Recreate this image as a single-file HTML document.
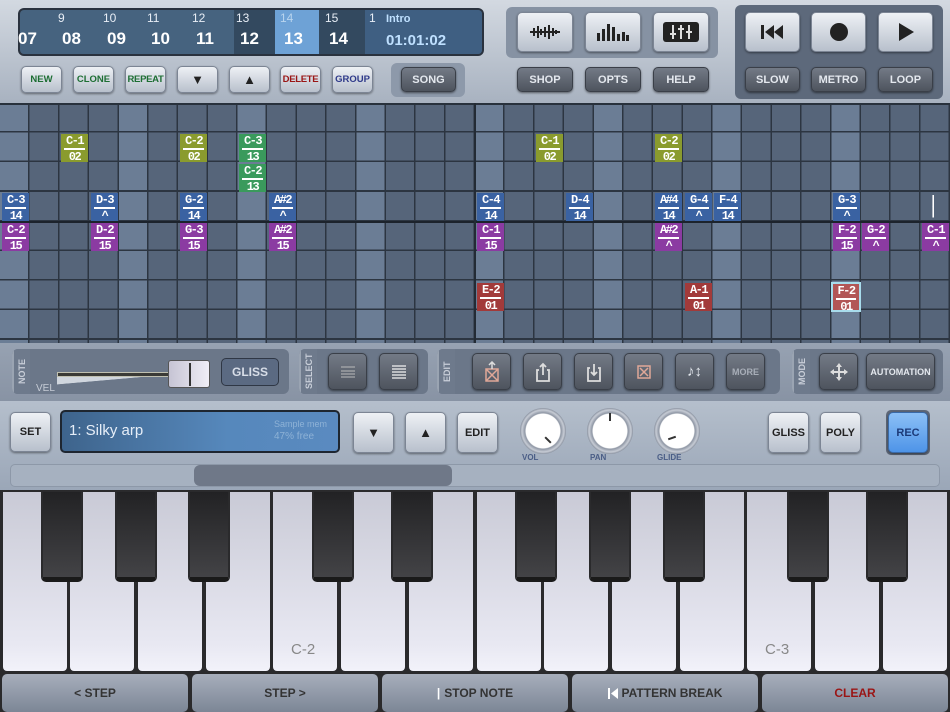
<!DOCTYPE html>
<html><head><meta charset="utf-8"><style>
*{margin:0;padding:0;box-sizing:border-box}
body{width:950px;height:712px;overflow:hidden;position:relative;font-family:"Liberation Sans",sans-serif;background:#a9b3c1}
.a{position:absolute}
.top{left:0;top:0;width:950px;height:103px;background:linear-gradient(180deg,#d3d9e1,#a8b2c0)}
.lb{position:absolute;border-radius:5px;background:linear-gradient(180deg,#eef1f5,#b8c0cc);border:1px solid #7c8594;box-shadow:0 1px 2px rgba(0,0,0,.45);font-weight:bold;font-size:11px;display:flex;align-items:center;justify-content:center;color:#222}
.db{position:absolute;border-radius:5px;background:linear-gradient(180deg,#737a86,#4e545e);border:1px solid #3a3f48;box-shadow:0 1px 2px rgba(0,0,0,.5);font-weight:bold;font-size:11px;display:flex;align-items:center;justify-content:center;color:#e4e8ee}
.panel{position:absolute;border-radius:6px;background:#7a8698}
.grid{left:0;top:103px;width:950px;height:240px;background-color:#56657a;
background-image:linear-gradient(#28313c 0 2px,transparent 2px),
repeating-linear-gradient(180deg,transparent 0 28px,#2c3541 28px 29.6px),
repeating-linear-gradient(90deg,transparent 0 28.2px,#2c3541 28.2px 29.6875px),
repeating-linear-gradient(90deg,#6b7d95 0 29.6875px,transparent 29.6875px 118.75px)}
.n{position:absolute;width:27px;height:28px;color:#fff;font:bold 12px/11px "Liberation Mono",monospace;text-align:center;padding-top:2px;letter-spacing:-1.5px;overflow:hidden}
.n span{display:block;border-bottom:2px solid #fff;margin:0 3px 2px;padding-bottom:1px}
.o{background:#8a9b2e}.g{background:#3a9a5c}.b{background:#3a62a2}.p{background:#8b3ba2}.r{background:#a23a3a}
.vl{position:absolute;writing-mode:vertical-rl;transform:rotate(180deg);color:#c8ced8;font-weight:bold;font-size:9px;text-align:center;display:flex;align-items:center;justify-content:center;background:#6e7a8c;border-right:2px solid #9aa4b2}
.wk{position:absolute;top:492px;width:64px;height:179px;border-radius:0 0 4px 4px;background:linear-gradient(180deg,#c9cad6,#e8e8f2 85%,#f2f2fa)}
.bk{position:absolute;top:490px;width:42px;height:92px;border-radius:0 0 5px 5px;background:linear-gradient(180deg,#222224,#434346);border:2px solid #2a2a2c;border-bottom:5px solid #1a1a1a}
.bb{position:absolute;top:674px;height:38px;width:186px;border-radius:5px;background:linear-gradient(180deg,#a7aebb,#7c8696);font-weight:bold;font-size:12px;color:#333;display:flex;align-items:center;justify-content:center}
.knob{position:absolute;width:46px;height:46px;border-radius:50%;background:radial-gradient(circle,#fff 0 17px,#8e96a4 18px,#c7ccd5 21px,#8a92a0 23px)}
.kl{position:absolute;top:453px;font-size:8px;font-weight:bold;color:#4a5d86}
.sm{font-size:9.5px}
.dn{position:absolute;top:29px;color:#fff;font-weight:bold;font-size:17px}
.up{position:absolute;top:11px;color:#e8eef6;font-size:12px}
</style></head><body>
<div class="a top"></div>
<div class="a" style="left:18px;top:8px;width:466px;height:48px;border-radius:6px;background:#2a323e">
<div style="position:absolute;left:2px;top:2px;width:462px;height:44px;border-radius:4px;background:#46637f"></div>
<div style="position:absolute;left:216px;top:2px;width:42px;height:44px;background:#33495f"></div>
<div style="position:absolute;left:257px;top:2px;width:44px;height:44px;background:#6ea2d6"></div>
<div style="position:absolute;left:301px;top:2px;width:46px;height:44px;background:#33495f"></div>
<div style="position:absolute;left:347px;top:2px;width:117px;height:44px;background:#3f5f82;border-radius:0 4px 4px 0"></div>
</div>
<div class="dn" style="left:18px">07</div>
<div class="up" style="left:58px">9</div><div class="dn" style="left:62px">08</div>
<div class="up" style="left:103px">10</div><div class="dn" style="left:107px">09</div>
<div class="up" style="left:147px">11</div><div class="dn" style="left:151px">10</div>
<div class="up" style="left:192px">12</div><div class="dn" style="left:196px">11</div>
<div class="up" style="left:236px">13</div><div class="dn" style="left:240px">12</div>
<div class="up" style="left:280px;color:#b8d4ee">14</div><div class="dn" style="left:284px">13</div>
<div class="up" style="left:325px">15</div><div class="dn" style="left:329px">14</div>
<div class="up" style="left:369px">1</div>
<div class="a" style="left:386px;top:13px;color:#bfe0ff;font-weight:bold;font-size:11px">Intro</div>
<div class="a" style="left:386px;top:32px;color:#bfe0ff;font-weight:bold;font-size:15px">01:01:02</div>
<div class="lb sm" style="left:21px;top:66px;width:41px;height:27px;color:#1d6e33">NEW</div>
<div class="lb sm" style="left:73px;top:66px;width:41px;height:27px;color:#1d6e33">CLONE</div>
<div class="lb sm" style="left:125px;top:66px;width:41px;height:27px;color:#1d6e33;letter-spacing:-.3px">REPEAT</div>
<div class="lb" style="left:177px;top:66px;width:41px;height:27px;font-size:13px">▼</div>
<div class="lb" style="left:229px;top:66px;width:41px;height:27px;font-size:13px">▲</div>
<div class="lb sm" style="left:280px;top:66px;width:41px;height:27px;color:#9a1515;letter-spacing:-.3px">DELETE</div>
<div class="lb sm" style="left:332px;top:66px;width:41px;height:27px;color:#2f3a8a">GROUP</div>
<div class="panel" style="left:391px;top:63px;width:74px;height:34px;background:#8d99aa"></div>
<div class="db" style="left:401px;top:67px;width:55px;height:25px">SONG</div>
<div class="panel" style="left:506px;top:7px;width:212px;height:51px;background:#8692a3"></div>
<div class="lb" style="left:517px;top:12px;width:56px;height:40px"><svg width="30" height="16" viewBox="0 0 30 16" fill="#222"><rect x="0" y="7" width="30" height="2"/><rect x="3" y="4" width="2" height="8"/><rect x="7" y="2" width="2" height="12"/><rect x="10" y="5" width="2" height="6"/><rect x="14" y="3" width="2" height="10"/><rect x="18" y="1" width="2" height="14"/><rect x="22" y="4" width="2" height="8"/><rect x="25" y="6" width="2" height="4"/></svg></div>
<div class="lb" style="left:585px;top:12px;width:56px;height:40px"><svg width="32" height="18" viewBox="0 0 32 18" fill="#222"><rect x="0" y="10" width="3" height="8"/><rect x="5" y="6" width="3" height="12"/><rect x="10" y="1" width="3" height="17"/><rect x="15" y="4" width="3" height="14"/><rect x="20" y="11" width="3" height="7"/><rect x="25" y="9" width="3" height="9"/><rect x="29" y="12" width="3" height="6"/></svg></div>
<div class="lb" style="left:653px;top:12px;width:56px;height:40px"><svg width="36" height="20" viewBox="0 0 36 20"><rect width="36" height="20" rx="3" fill="#222"/><g stroke="#ddd" stroke-width="2"><line x1="10" y1="3" x2="10" y2="17"/><line x1="18" y1="3" x2="18" y2="17"/><line x1="26" y1="3" x2="26" y2="17"/><line x1="7" y1="12" x2="13" y2="12"/><line x1="15" y1="7" x2="21" y2="7"/><line x1="23" y1="10" x2="29" y2="10"/></g></svg></div>
<div class="db" style="left:517px;top:67px;width:56px;height:25px">SHOP</div>
<div class="db" style="left:585px;top:67px;width:56px;height:25px">OPTS</div>
<div class="db" style="left:653px;top:67px;width:56px;height:25px">HELP</div>
<div class="panel" style="left:735px;top:5px;width:208px;height:94px;background:#5d697b"></div>
<div class="lb" style="left:745px;top:12px;width:55px;height:40px"><svg width="24" height="14" viewBox="0 0 24 14" fill="#222"><rect x="0" y="0" width="3" height="14"/><polygon points="4,7 13,0 13,14"/><polygon points="13,7 22,0 22,14"/></svg></div>
<div class="lb" style="left:811px;top:12px;width:55px;height:40px"><div style="width:18px;height:18px;border-radius:50%;background:#222"></div></div>
<div class="lb" style="left:878px;top:12px;width:55px;height:40px"><svg width="16" height="18" viewBox="0 0 16 18"><polygon points="1,0 16,9 1,18" fill="#222"/></svg></div>
<div class="db" style="left:745px;top:67px;width:55px;height:25px">SLOW</div>
<div class="db" style="left:811px;top:67px;width:55px;height:25px">METRO</div>
<div class="db" style="left:878px;top:67px;width:55px;height:25px">LOOP</div>
<div class="a grid"></div>
<div class="a" style="left:0;top:221px;width:950px;height:2px;background:#1c232c"></div>
<div class="a" style="left:474px;top:103px;width:2px;height:240px;background:#232b35"></div>
<div class="n o" style="left:61px;top:134px"><span>C-1</span>02</div>
<div class="n o" style="left:180px;top:134px"><span>C-2</span>02</div>
<div class="n g" style="left:239px;top:134px"><span>C-3</span>13</div>
<div class="n g" style="left:239px;top:164px"><span>C-2</span>13</div>
<div class="n o" style="left:536px;top:134px"><span>C-1</span>02</div>
<div class="n o" style="left:655px;top:134px"><span>C-2</span>02</div>
<div class="n b" style="left:2px;top:193px"><span>C-3</span>14</div>
<div class="n b" style="left:91px;top:193px"><span>D-3</span>^</div>
<div class="n b" style="left:180px;top:193px"><span>G-2</span>14</div>
<div class="n b" style="left:269px;top:193px"><span>A#2</span>^</div>
<div class="n b" style="left:477px;top:193px"><span>C-4</span>14</div>
<div class="n b" style="left:566px;top:193px"><span>D-4</span>14</div>
<div class="n b" style="left:655px;top:193px"><span>A#4</span>14</div>
<div class="n b" style="left:685px;top:193px"><span>G-4</span>^</div>
<div class="n b" style="left:714px;top:193px"><span>F-4</span>14</div>
<div class="n b" style="left:833px;top:193px"><span>G-3</span>^</div>
<div class="n" style="left:919px;top:194px">|<br>|</div>
<div class="n p" style="left:2px;top:223px"><span>C-2</span>15</div>
<div class="n p" style="left:91px;top:223px"><span>D-2</span>15</div>
<div class="n p" style="left:180px;top:223px"><span>G-3</span>15</div>
<div class="n p" style="left:269px;top:223px"><span>A#2</span>15</div>
<div class="n p" style="left:477px;top:223px"><span>C-1</span>15</div>
<div class="n p" style="left:655px;top:223px"><span>A#2</span>^</div>
<div class="n p" style="left:833px;top:223px"><span>F-2</span>15</div>
<div class="n p" style="left:862px;top:223px"><span>G-2</span>^</div>
<div class="n p" style="left:922px;top:223px"><span>C-1</span>^</div>
<div class="n r" style="left:477px;top:283px"><span>E-2</span>01</div>
<div class="n r" style="left:685px;top:283px"><span>A-1</span>01</div>
<div class="n r" style="left:831px;top:282px;width:30px;height:30px;border:2px solid #a8dcec;background:#b25656"><span>F-2</span>01</div>
<div class="a" style="left:0;top:343px;width:950px;height:58px;background:linear-gradient(180deg,#97a2b2,#8893a4)"></div>
<div class="panel" style="left:12px;top:349px;width:277px;height:45px;background:#6b7789;overflow:hidden"><div class="vl" style="left:0;top:0;width:18px;height:45px">NOTE</div></div>
<div class="a" style="left:57px;top:372px;width:120px;height:5px;background:#3a3a36;border:1px solid #c0c0b0"></div>
<div class="a" style="left:57px;top:377px;width:115px;height:8px;background:linear-gradient(175deg,#d0d6de 0 40%,transparent 42%)"></div>
<div class="a" style="left:36px;top:383px;color:#c6ccd6;font-size:10px">VEL</div>
<div class="a" style="left:168px;top:360px;width:42px;height:28px;border-radius:3px;background:linear-gradient(90deg,#c6c4d4,#f0eef6);border:1px solid #555"><div style="position:absolute;left:20px;top:2px;width:2px;height:23px;background:#333"></div></div>
<div class="a" style="left:221px;top:358px;width:58px;height:28px;border-radius:5px;background:#5b6a82;border:1px solid #2f3745;color:#d8dee8;font-weight:bold;font-size:12px;display:flex;align-items:center;justify-content:center">GLISS</div>
<div class="panel" style="left:299px;top:349px;width:129px;height:45px;background:#6b7789;overflow:hidden"><div class="vl" style="left:0;top:0;width:18px;height:45px">SELECT</div></div>
<div class="db" style="left:328px;top:353px;width:39px;height:37px"><svg width="14" height="12"><g stroke="#bbb" stroke-width="1"><line x1="0" y1="1" x2="14" y2="1"/><line x1="0" y1="5" x2="14" y2="5"/><line x1="0" y1="8" x2="14" y2="8"/><line x1="0" y1="11" x2="14" y2="11"/></g></svg></div>
<div class="db" style="left:379px;top:353px;width:39px;height:37px"><svg width="14" height="14"><g stroke="#eee" stroke-width="1.3"><line x1="0" y1="1" x2="14" y2="1"/><line x1="0" y1="4" x2="14" y2="4"/><line x1="0" y1="7" x2="14" y2="7"/><line x1="0" y1="10" x2="14" y2="10"/><line x1="0" y1="13" x2="14" y2="13"/></g></svg></div>
<div class="panel" style="left:437px;top:349px;width:343px;height:45px;background:#6b7789;overflow:hidden"><div class="vl" style="left:0;top:0;width:18px;height:45px">EDIT</div></div>
<div class="db" style="left:472px;top:353px;width:39px;height:37px"><svg width="16" height="22" fill="none" stroke="#e0a898" stroke-width="1.5"><rect x="2" y="8" width="12" height="12"/><path d="M2 8l12 12M14 8L2 20"/><path d="M8 8V1M5 4l3-3 3 3" stroke="#ddd"/></svg></div>
<div class="db" style="left:523px;top:353px;width:39px;height:37px"><svg width="16" height="20" fill="none" stroke="#ddd" stroke-width="1.8"><path d="M4 8H2v11h12V8h-2"/><path d="M8 13V2M5 5l3-3 3 3"/></svg></div>
<div class="db" style="left:574px;top:353px;width:39px;height:37px"><svg width="16" height="20" fill="none" stroke="#ddd" stroke-width="1.8"><path d="M4 6H2v13h12V6h-2"/><path d="M8 2v11M5 10l3 3 3-3"/></svg></div>
<div class="db" style="left:624px;top:353px;width:39px;height:37px"><svg width="14" height="14" fill="none" stroke="#e0a898" stroke-width="1.5"><rect x="1" y="1" width="12" height="12"/><path d="M3 3l8 8M11 3l-8 8"/></svg></div>
<div class="db" style="left:675px;top:353px;width:39px;height:37px;font-size:15px">♪↕</div>
<div class="db" style="left:726px;top:353px;width:39px;height:37px;color:#a8aeb8;font-size:9px">MORE</div>
<div class="panel" style="left:792px;top:349px;width:151px;height:45px;background:#6b7789;overflow:hidden"><div class="vl" style="left:0;top:0;width:18px;height:45px">MODE</div></div>
<div class="db" style="left:819px;top:353px;width:39px;height:37px"><svg width="18" height="18" fill="#ddd"><rect x="8" y="3" width="2" height="12"/><rect x="3" y="8" width="12" height="2"/><polygon points="9,0 12,4 6,4"/><polygon points="9,18 12,14 6,14"/><polygon points="0,9 4,6 4,12"/><polygon points="18,9 14,6 14,12"/></svg></div>
<div class="db" style="left:866px;top:353px;width:69px;height:37px;font-size:9px">AUTOMATION</div>
<div class="a" style="left:0;top:401px;width:950px;height:91px;background:linear-gradient(180deg,#b5bfcc,#9aa6b7)"></div>
<div class="lb" style="left:10px;top:412px;width:41px;height:40px">SET</div>
<div class="a" style="left:60px;top:410px;width:280px;height:43px;border-radius:5px;border:2px solid #1e2630;background:linear-gradient(90deg,#3e648c,#5688bc 60%,#5a8ac0)"></div>
<div class="a" style="left:69px;top:422px;color:#e6eef8;font-size:15px">1: Silky arp</div>
<div class="a" style="left:274px;top:419px;color:#8eb2d6;font-size:9px">Sample mem</div>
<div class="a" style="left:274px;top:431px;color:#8eb2d6;font-size:10px">47% free</div>
<div class="lb" style="left:353px;top:412px;width:41px;height:41px;font-size:13px">▼</div>
<div class="lb" style="left:405px;top:412px;width:41px;height:41px;font-size:13px">▲</div>
<div class="lb" style="left:457px;top:412px;width:41px;height:41px">EDIT</div>
<div class="knob" style="left:520px;top:408px"></div>
<div class="knob" style="left:587px;top:408px"></div>
<div class="knob" style="left:654px;top:408px"></div>
<div class="a" style="left:547px;top:436px;width:2px;height:8px;background:#333;transform:rotate(-45deg)"></div>
<div class="a" style="left:609px;top:413px;width:2px;height:8px;background:#333"></div>
<div class="a" style="left:671px;top:434px;width:2px;height:8px;background:#333;transform:rotate(70deg)"></div>
<div class="kl" style="left:522px">VOL</div><div class="kl" style="left:590px">PAN</div><div class="kl" style="left:657px">GLIDE</div>
<div class="lb" style="left:768px;top:412px;width:41px;height:41px">GLISS</div>
<div class="lb" style="left:820px;top:412px;width:41px;height:41px">POLY</div>
<div class="a" style="left:886px;top:410px;width:44px;height:45px;border-radius:5px;background:#5d6778"></div>
<div class="lb" style="left:888px;top:412px;width:40px;height:41px;background:linear-gradient(180deg,#8cc0f6,#4e94e8);color:#1c3a78;border-color:#3a6aa8">REC</div>
<div class="a" style="left:10px;top:464px;width:930px;height:23px;border-radius:5px;background:#a6b1c0;border:1px solid #8d98a8"></div>
<div class="a" style="left:194px;top:465px;width:258px;height:21px;border-radius:6px;background:#6f7888"></div>
<div class="a" style="left:0;top:490px;width:950px;height:222px;background:#2a2a2c"></div>
<div class="wk" style="left:3px"></div><div class="wk" style="left:70px"></div><div class="wk" style="left:138px"></div><div class="wk" style="left:206px"></div><div class="wk" style="left:273px"></div><div class="wk" style="left:341px"></div><div class="wk" style="left:409px"></div>
<div class="wk" style="left:477px"></div><div class="wk" style="left:544px"></div><div class="wk" style="left:612px"></div><div class="wk" style="left:680px"></div><div class="wk" style="left:747px"></div><div class="wk" style="left:815px"></div><div class="wk" style="left:883px"></div>
<div class="a" style="left:291px;top:641px;color:#888;font-size:15px">C-2</div>
<div class="a" style="left:765px;top:641px;color:#888;font-size:15px">C-3</div>
<div class="bk" style="left:41px"></div><div class="bk" style="left:115px"></div><div class="bk" style="left:188px"></div><div class="bk" style="left:312px"></div><div class="bk" style="left:391px"></div>
<div class="bk" style="left:515px"></div><div class="bk" style="left:589px"></div><div class="bk" style="left:663px"></div><div class="bk" style="left:787px"></div><div class="bk" style="left:866px"></div>
<div class="bb" style="left:2px">&lt; STEP</div>
<div class="bb" style="left:192px">STEP &gt;</div>
<div class="bb" style="left:382px"><span style="color:#fff;margin-right:4px">|</span>STOP NOTE</div>
<div class="bb" style="left:572px"><svg width="10" height="11" style="margin-right:4px"><rect x="0" y="0" width="2" height="11" fill="#fff"/><polygon points="3,5.5 10,0 10,11" fill="#fff"/></svg>PATTERN BREAK</div>
<div class="bb" style="left:762px;color:#9a1515">CLEAR</div>
</body></html>
